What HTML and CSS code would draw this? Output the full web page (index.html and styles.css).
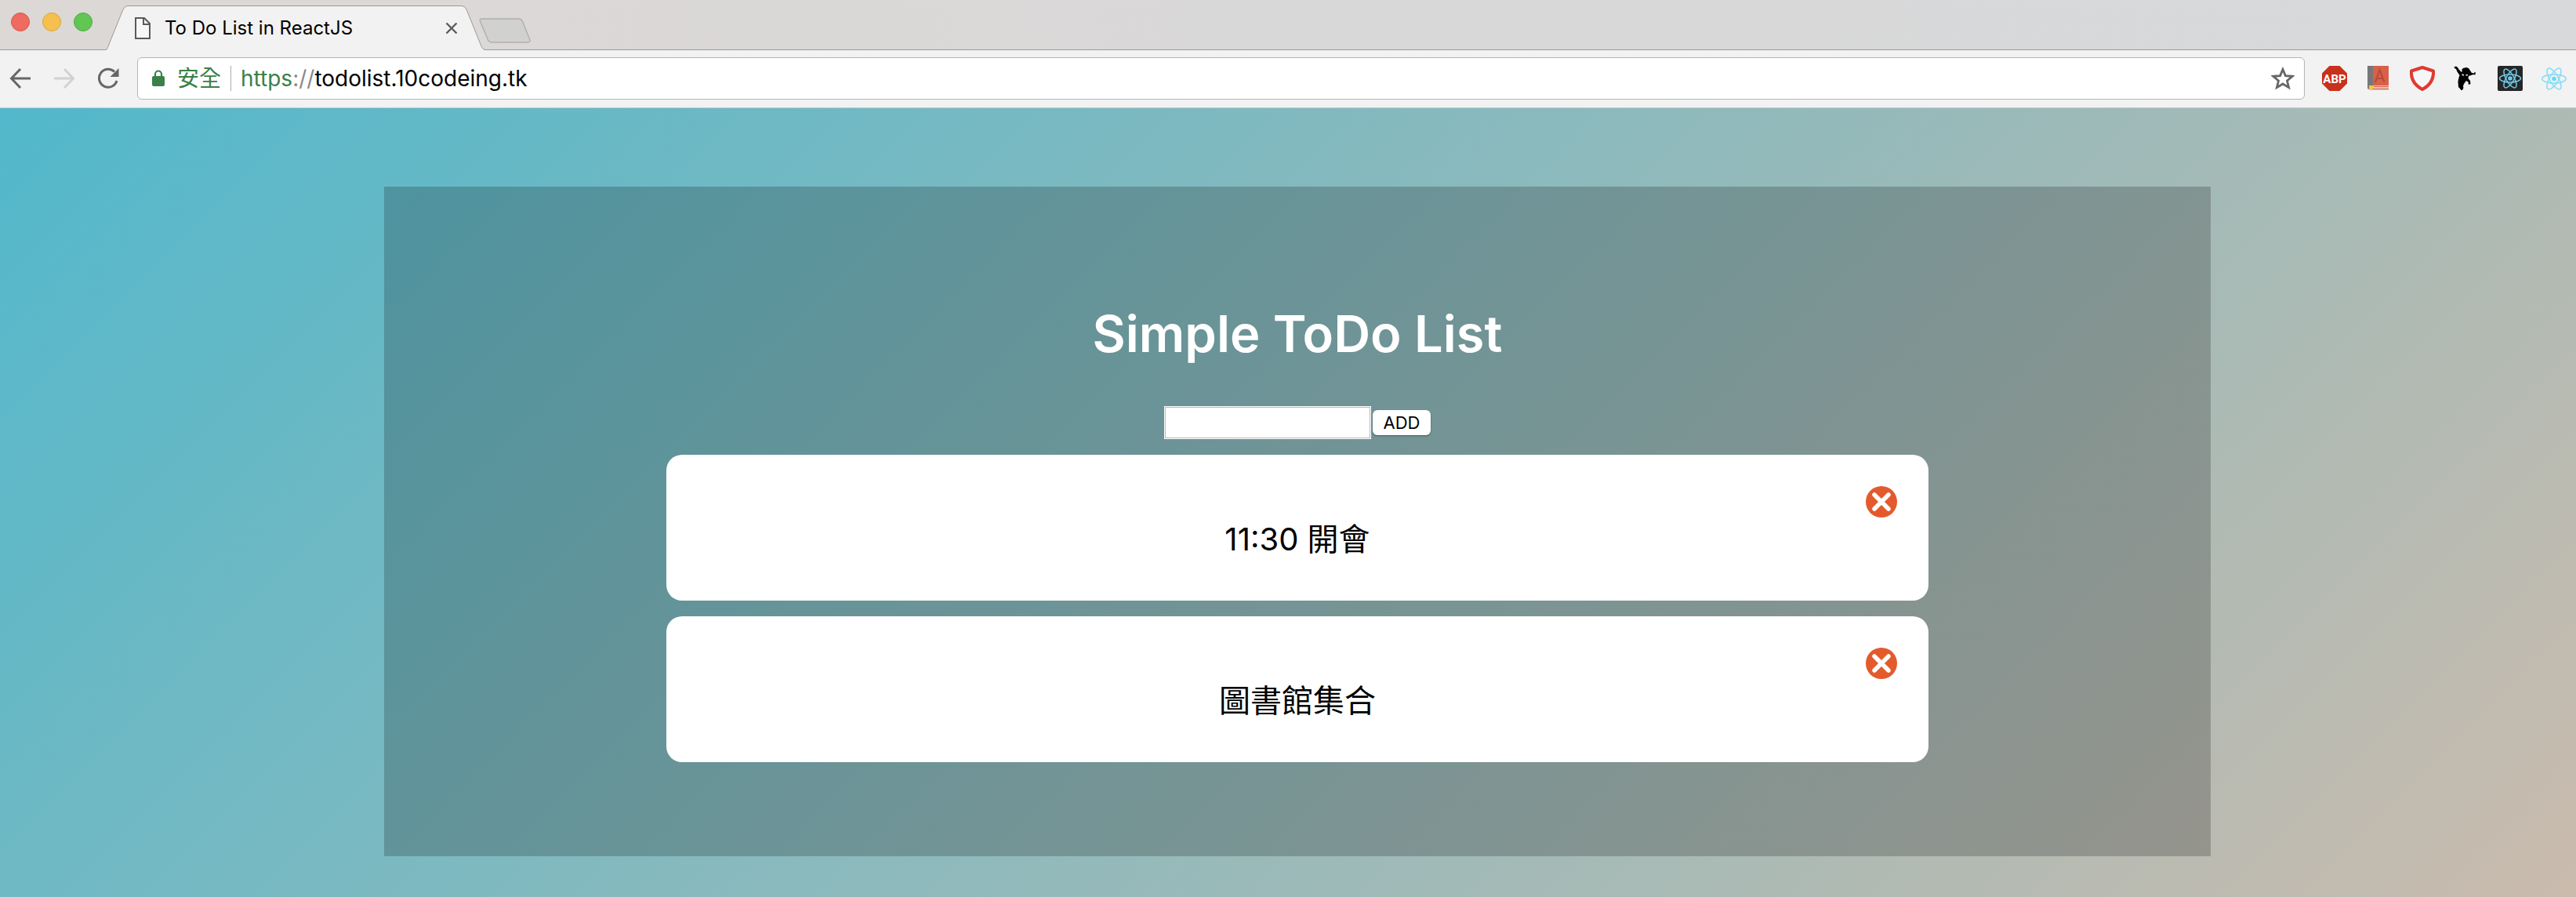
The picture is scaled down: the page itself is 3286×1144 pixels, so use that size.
FILE: index.html
```html
<!DOCTYPE html>
<html lang="zh-Hant">
<head>
<meta charset="utf-8">
<title>To Do List in ReactJS</title>
<link rel="stylesheet" href="styles.css">
</head>
<body>
<header class="browser">
  <div class="tabstrip">
    <div class="lights">
      <span class="light red"></span>
      <span class="light yellow"></span>
      <span class="light green"></span>
    </div>
    <div class="tab">
      <svg class="tab-shape" viewBox="0 0 484 57" preserveAspectRatio="none" aria-hidden="true"><path d="M0 57C2 56 2 54 3 52L22 5Q24 .5 28 .5H454Q458 .5 460 5L479 52C480 54 481 56 484 57Z" fill="#f2f2f2"/><path d="M0 56.5C2 56 2 54 3 52L22 5Q24 .5 28 .5H454Q458 .5 460 5L479 52C480 54 481 56 484 56.5" fill="none" stroke="#999"/></svg>
      <svg class="doc" viewBox="0 0 20 28" aria-hidden="true"><path d="M1 1H12L19 8V27H1ZM11 1V9H19" fill="#fff" fill-opacity=".4" stroke="#5a5a5a" stroke-width="2"/></svg>
      <span class="tab-title">To Do List in ReactJS</span>
      <button class="bare tab-close" aria-label="Close tab"><svg width="16" height="16" viewBox="0 0 16 16"><path d="M1.500 1.500 14.500 14.500M14.500 1.500 1.500 14.500" stroke="#5a5a5a" stroke-width="2.400"/></svg></button>
    </div>
    <button class="bare new-tab" aria-label="New tab"><svg width="66" height="32" viewBox="0 0 66 32"><path d="M3 1H50Q54 1 55.500 4L64.500 27Q66 31 62 31H17Q13 31 11.500 28L1.500 4Q.5 1 3 1Z" fill="#d1d1d0" stroke="#b0afae" stroke-width="1.400"/></svg></button>
  </div>
  <div class="toolbar">
    <nav class="nav">
      <button class="bare" aria-label="Back"><svg width="28" height="28" viewBox="0 0 28 28"><path d="M27 14H3M14 2 2.500 14 14 26" fill="none" stroke="#666" stroke-width="3"/></svg></button>
      <button class="bare" aria-label="Forward"><svg width="28" height="28" viewBox="0 0 28 28"><path d="M1 14H25M14 2 25.500 14 14 26" fill="none" stroke="#d2d2d2" stroke-width="3"/></svg></button>
      <button class="bare" aria-label="Reload"><svg width="28" height="28" viewBox="0 0 28 28"><path d="M25 17A11.500 11.500 0 1 1 22 5.500" fill="none" stroke="#666" stroke-width="3"/><path d="M27.500 1V12H16.500Z" fill="#666"/></svg></button>
    </nav>
    <div class="address">
      <svg class="lock" viewBox="0 0 16 22" aria-hidden="true"><path d="M4 9V5.500a4 4 0 0 1 8 0V9" fill="none" stroke="#3a8048" stroke-width="2.200"/><rect y="8" width="16" height="13" rx="2" fill="#3a8048"/></svg>
      <span class="secure">安全</span>
      <span class="divider"></span>
      <a class="url" href="#"><span class="scheme">https</span><span class="slashes">://</span>todolist.10codeing.tk</a>
      <button class="bare star" aria-label="Bookmark"><svg width="30" height="30" viewBox="0 0 30 30"><path d="M15 3.500 18.400 11.600 27.200 12.300 20.500 18 22.600 26.600 15 22 7.400 26.600 9.500 18 2.800 12.300 11.600 11.600Z" fill="none" stroke="#666" stroke-width="2.800"/></svg></button>
    </div>
    <div class="extensions">
      <button class="bare" aria-label="ABP"><svg width="32" height="32" viewBox="0 0 32 32"><path d="M9.500 0H22.500L32 9.500V22.500L22.500 32H9.500L0 22.500V9.500Z" fill="#c8311b"/><text x="16" y="21.500" class="abp">ABP</text></svg></button>
      <button class="bare" aria-label="Dictionary"><svg width="32" height="32" viewBox="0 0 32 32"><path d="M2 0H9V30H4Q2 30 2 28Z" fill="#777"/><path d="M9 0H29V25H9Z" fill="#d9604a"/><path d="M6 25H29V31H6Z" fill="#eee4e2"/><path d="M8 26.500H29M8 29.500H29" stroke="#d9604a" stroke-width="1.400"/><path d="M4 25H11L8 31H4Z" fill="#f3c64b"/><path d="M12 21 17.500 5 23.500 21M14 16H21.500" fill="none" stroke="#b74c3b" stroke-width="2.200"/></svg></button>
      <button class="bare" aria-label="Shield"><svg width="32" height="32" viewBox="0 0 32 32"><path d="M16 2 30 6.500Q31 22 16 30Q1 22 2 6.500Z" fill="#f6f6f6" stroke="#e03a30" stroke-width="4" stroke-linejoin="round"/></svg></button>
      <button class="bare" aria-label="Ninja"><svg width="32" height="32" viewBox="0 0 32 32"><path d="M.5 1.500 3 .5 5 2 7 5 10 8 11 6 10 5 12 3 16 2 19 3 21 6 23 9 26 9.500 27 7.500 28 9 27.500 10 27.500 11.500 25 11 22 12 19 13 18.500 16 21 19 21.500 23 19 24 18.500 22 19 21 16 19 13 23 12 26 12.500 28 11 31 9.500 31 8 29 6 27 5.500 20 6.500 15 7.500 12 4.500 7.500 3 4 1 3Z" fill="#000"/><path d="M10.500 11 13 12M15.500 12 18 11.500" stroke="#eee" stroke-width="1.400"/></svg></button>
      <button class="bare" aria-label="React tools"><svg width="32" height="32" viewBox="0 0 32 32"><rect width="32" height="32" rx="2" fill="#262626"/><g fill="none" stroke="#70cdec" stroke-width="1.500"><ellipse cx="16" cy="16" rx="13.500" ry="5"/><ellipse cx="16" cy="16" rx="13.500" ry="5" transform="rotate(60 16 16)"/><ellipse cx="16" cy="16" rx="13.500" ry="5" transform="rotate(120 16 16)"/></g><circle cx="16" cy="16" r="2.800" fill="#70cdec"/></svg></button>
      <button class="bare" aria-label="React"><svg width="32" height="32" viewBox="0 0 32 32"><g fill="none" stroke="#83dbf6" stroke-width="1.500"><ellipse cx="16" cy="16.500" rx="15.200" ry="5.600"/><ellipse cx="16" cy="16.500" rx="15.200" ry="5.600" transform="rotate(60 16 16.500)"/><ellipse cx="16" cy="16.500" rx="15.200" ry="5.600" transform="rotate(120 16 16.500)"/></g><circle cx="16" cy="16.500" r="2.800" fill="#61dafb"/></svg></button>
    </div>
  </div>
</header>
<main class="page">
  <section class="panel">
    <h1 class="title">Simple ToDo List</h1>
    <form class="add">
      <input class="field" type="text" aria-label="New item">
      <button class="submit" type="button">ADD</button>
    </form>
    <ul class="list">
      <li class="item">11:30 開會
        <button class="bare remove" aria-label="Remove"><svg width="40" height="40" viewBox="0 0 40 40"><circle cx="20" cy="20" r="20" fill="#e35b2d"/><path d="M11 11 29 29M29 11 11 29" stroke="#fff" stroke-width="5.500" stroke-linecap="round"/></svg></button>
      </li>
      <li class="item">圖書館集合
        <button class="bare remove" aria-label="Remove"><svg width="40" height="40" viewBox="0 0 40 40"><circle cx="20" cy="20" r="20" fill="#e35b2d"/><path d="M11 11 29 29M29 11 11 29" stroke="#fff" stroke-width="5.500" stroke-linecap="round"/></svg></button>
      </li>
    </ul>
  </section>
</main>
</body>
</html>
```
FILE: styles.css
```css
* { box-sizing: border-box; }

body {
  margin: 0;
  min-height: 100vh;
  display: flex;
  flex-direction: column;
  font-family: Inter, "Noto Sans CJK TC", sans-serif;
  color: #000;
}

svg { display: block; }

.bare {
  display: block;
  padding: 0;
  border: 0;
  background: none;
}

/* Browser chrome */
.tabstrip {
  display: flex;
  align-items: flex-start;
  height: 64px;
  padding-left: 14px;
  border-bottom: 1px solid #999;
  background: linear-gradient(90deg, #dcd8d6, #d7d9db);
}

.lights {
  display: flex;
  gap: 16px;
  width: 121px;
  padding-top: 16px;
}

.light {
  width: 24px;
  height: 24px;
  border: 1px solid;
  border-radius: 50%;
}

.red { background: #ef6a5f; border-color: #d8564b; }
.yellow { background: #f6c04f; border-color: #dba43a; }
.green { background: #61c654; border-color: #4ead40; }

.tab {
  position: relative;
  display: flex;
  align-items: center;
  width: 484px;
  height: 57px;
  margin-top: 7px;
  padding: 0 35px 0 37px;
}

.tab-shape {
  position: absolute;
  inset: 0;
  width: 100%;
  height: 100%;
}

.doc {
  position: relative;
  width: 20px;
  height: 28px;
}

.tab-title {
  position: relative;
  margin-left: 18px;
  font-size: 24px;
  line-height: 28px;
}

.tab-close {
  position: relative;
  margin-left: auto;
}

.new-tab { margin: 23px 0 0 -8px; }

.toolbar {
  display: flex;
  align-items: center;
  height: 74px;
  padding: 0 12px 2px;
  border-bottom: 1px solid #c9c9c9;
  background: #f2f2f2;
}

.nav {
  display: flex;
  gap: 28px;
  width: 163px;
}

.address {
  display: flex;
  flex: 1;
  align-items: center;
  height: 54px;
  padding: 0 12px 0 18px;
  border: 1px solid #b5b5b5;
  border-radius: 6px;
  background: #fff;
}

.lock { width: 16px; height: 22px; }

.secure {
  margin-left: 16px;
  color: #3a8048;
  font-size: 28px;
  line-height: 32px;
}

.divider {
  width: 1px;
  height: 32px;
  margin: 0 12px;
  background: #aaa;
}

.url {
  color: #000;
  font-size: 28px;
  line-height: 32px;
  text-decoration: none;
}

.scheme { color: #3a8048; }
.slashes { color: #888; }
.star { margin-left: auto; }

.extensions {
  display: flex;
  gap: 24px;
  margin-left: 22px;
}

.abp {
  fill: #fff;
  font: bold 15px Roboto, sans-serif;
  text-anchor: middle;
}

/* Page */
.page {
  flex: 1;
  padding: 100px 466px 52px 490px;
  background: linear-gradient(135deg, #52b8cb, #cabbad);
}

.panel {
  padding: 140px 360px 120px;
  background: rgba(0, 0, 0, 0.2);
}

.title {
  margin: 0 0 44px;
  color: #fff;
  font-size: 65px;
  font-weight: 600;
  line-height: 96px;
  text-align: center;
}

.add {
  display: flex;
  justify-content: center;
  align-items: center;
  gap: 2px;
  margin-bottom: 20px;
}

.field {
  width: 264px;
  height: 42px;
  padding: 0 6px;
  border: 1px solid #fff;
  outline: 1px solid #bbb;
  outline-offset: -2px;
  background: #fff;
  font-size: 22px;
}

.submit {
  width: 74px;
  height: 32px;
  padding: 0;
  border: 0;
  border-radius: 6px;
  background: #fff;
  box-shadow: 0 1px 2px rgba(0, 0, 0, 0.4);
  color: #000;
  font: 22px/32px Inter, sans-serif;
}

.list {
  display: flex;
  flex-direction: column;
  gap: 20px;
  margin: 0;
  padding: 0;
  list-style: none;
}

.item {
  position: relative;
  padding: 80px 40px 50px;
  border-radius: 20px;
  background: #fff;
  font-size: 40px;
  line-height: 56px;
  text-align: center;
}

.remove {
  position: absolute;
  top: 40px;
  right: 40px;
}
```
